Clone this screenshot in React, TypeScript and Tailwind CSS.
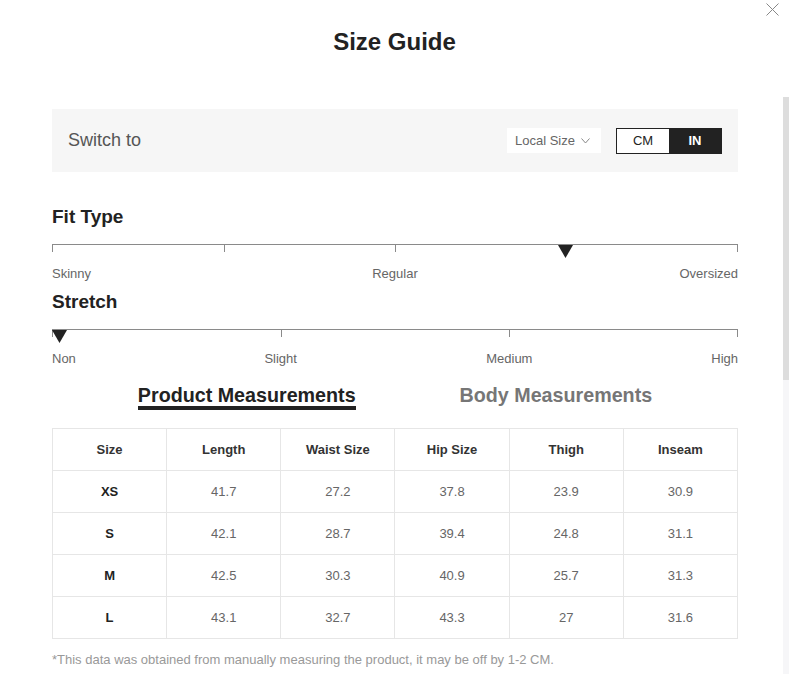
import React from "react";

const font = { fontFamily: '"Liberation Sans", Arial, sans-serif' };

function Triangle({ w = 14, h = 13 }: { w?: number; h?: number }) {
  return (
    <svg width={w} height={h} viewBox={`0 0 ${w} ${h}`}>
      <polygon points={`0,0 ${w},0 ${w / 2},${h}`} fill="#222" />
    </svg>
  );
}

function Track({ ticks, marker }: { ticks: number[]; marker: number }) {
  return (
    <div className="relative h-px w-full bg-[#8a8a8a]">
      {ticks.map((t, i) => (
        <div
          key={i}
          className="absolute top-0 h-[8px] w-px bg-[#8a8a8a]"
          style={{ left: `calc(${t * 100}% - ${t === 1 ? 1 : 0}px)` }}
        />
      ))}
      <div className="absolute top-[1px]" style={{ left: marker }}>
        <Triangle w={15} h={13} />
      </div>
    </div>
  );
}

const rows = [
  ["XS", "41.7", "27.2", "37.8", "23.9", "30.9"],
  ["S", "42.1", "28.7", "39.4", "24.8", "31.1"],
  ["M", "42.5", "30.3", "40.9", "25.7", "31.3"],
  ["L", "43.1", "32.7", "43.3", "27", "31.6"],
];
const heads = ["Size", "Length", "Waist Size", "Hip Size", "Thigh", "Inseam"];

export default function App() {
  return (
    <div className="relative h-[674px] w-[789px] overflow-hidden bg-white" style={font}>
      <button className="absolute left-[766px] top-[3px] h-[13px] w-[13px]">
        <svg width="13" height="13" viewBox="0 0 13 13">
          <path d="M0.5 0.5 L12.5 12.5 M12.5 0.5 L0.5 12.5" stroke="#888" strokeWidth="1" />
        </svg>
      </button>
      <div className="h-[97px] pt-[28px]">
        <h1 className="text-center text-[24px] font-bold leading-[28px] text-[#222]">Size Guide</h1>
      </div>
      <div className="flex h-[577px]">
        <div className="w-[783px] pl-[52px]">
          <div className="w-[686px]">
            <div className="mt-[12px] flex h-[63px] items-center bg-[#f6f6f6] pl-[16px] pr-[16px]">
              <span className="text-[18px] text-[#555]">Switch to</span>
              <div className="ml-auto flex h-[25px] w-[94px] items-center bg-white pl-[8px]">
                <span className="text-[13px] text-[#666]">Local Size</span>
                <svg className="ml-[6px]" width="9" height="6" viewBox="0 0 9 6">
                  <path d="M0.5 0.5 L4.5 5 L8.5 0.5" fill="none" stroke="#888" strokeWidth="1" />
                </svg>
              </div>
              <div className="ml-[15px] flex h-[26px] w-[106px] border border-[#222]">
                <div className="flex flex-1 items-center justify-center bg-white text-[13px] text-[#222]">CM</div>
                <div className="flex flex-1 items-center justify-center bg-[#222] text-[13px] font-bold text-white">IN</div>
              </div>
            </div>

            <h2 className="mt-[34px] text-[19px] font-bold leading-[22px] text-[#222]">Fit Type</h2>
            <div className="mt-[16px]">
              <Track ticks={[0, 0.25, 0.5, 1]} marker={506} />
            </div>
            <div className="mt-[21px] grid grid-cols-3 text-[13px] leading-[15px] text-[#666]">
              <span className="text-left">Skinny</span>
              <span className="text-center">Regular</span>
              <span className="text-right">Oversized</span>
            </div>

            <h2 className="mt-[10px] text-[19px] font-bold leading-[22px] text-[#222]">Stretch</h2>
            <div className="mt-[16px]">
              <Track ticks={[0, 1 / 3, 2 / 3, 1]} marker={0} />
            </div>
            <div className="mt-[21px] grid grid-cols-6 text-[13px] leading-[15px] text-[#666]">
              <span className="text-left">Non</span>
              <span className="col-span-2 text-center">Slight</span>
              <span className="col-span-2 text-center">Medium</span>
              <span className="text-right">High</span>
            </div>

            <div className="mt-[19px] flex justify-center gap-[104px]">
              <div className="flex flex-col">
                <span className="text-[19.7px] font-bold leading-[21px] text-[#222]">Product Measurements</span>
                <div className="h-[4px] bg-[#222]" />
              </div>
              <span className="text-[19.7px] font-bold leading-[21px] text-[#767676]">Body Measurements</span>
            </div>

            <table className="mt-[18px] w-full table-fixed border-collapse">
              <thead>
                <tr className="h-[42px]">
                  {heads.map((h, i) => (
                    <th
                      key={h}
                      className={`border border-[#e6e6e6] text-center text-[13px] font-bold text-[#333] ${i === 3 ? "border-l-[#d6d6d6]" : ""}`}
                    >
                      {h}
                    </th>
                  ))}
                </tr>
              </thead>
              <tbody>
                {rows.map((r) => (
                  <tr key={r[0]} className="h-[42px]">
                    {r.map((c, i) => (
                      <td
                        key={i}
                        className={`border border-[#e6e6e6] text-center text-[13px] ${i === 0 ? "font-bold text-[#222]" : "text-[#666]"} ${i === 3 ? "border-l-[#d6d6d6]" : ""}`}
                      >
                        {c}
                      </td>
                    ))}
                  </tr>
                ))}
              </tbody>
            </table>

            <p className="mt-[13px] text-[13px] leading-[15px] text-[#999]">
              *This data was obtained from manually measuring the product, it may be off by 1-2 CM.
            </p>
          </div>
        </div>
        <div className="flex w-[6px] flex-col bg-[#f6f6f8]">
          <div className="h-[283px] bg-[#dddddd]" />
        </div>
      </div>
    </div>
  );
}
